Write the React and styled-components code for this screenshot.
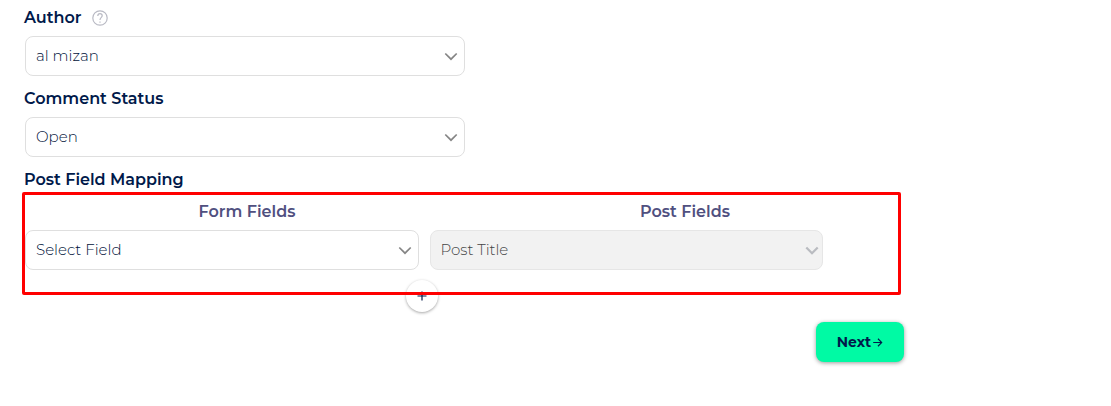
import React from 'react';
import styled, { createGlobalStyle } from 'styled-components';

const GlobalStyle = createGlobalStyle`
  *, *::before, *::after { box-sizing: border-box; }
  body {
    margin: 0;
    background: #fff;
    color: #00194a;
    font-family: Montserrat, Inter, "Liberation Sans", sans-serif;
  }
  button, select { font-family: inherit; }
`;

const Form = styled.form`
  display: flex;
  flex-direction: column;
  gap: 10px;
  max-width: 928px;
  padding: 5px 24px 24px;
`;

const Field = styled.div`
  display: flex;
  flex-direction: column;
  gap: 5px;
`;

const LabelRow = styled.div`
  display: flex;
  align-items: center;
  gap: 10px;
`;

const Label = styled.label`
  font-size: 16px;
  font-weight: 600;
  line-height: 26px;
`;

const HelpButton = styled.button`
  display: flex;
  padding: 0;
  border: 0;
  background: none;
  color: #b9bac4;
  cursor: help;
`;

const SelectBox = styled.div`
  position: relative;
  flex: 1;
  width: 100%;
  max-width: ${(p) => (p.$wide ? 'none' : '441px')};
  padding-left: 1px;
  color: ${(p) => (p.$muted ? '#b9bbc0' : '#858585')};
`;

const Select = styled.select`
  display: block;
  width: 100%;
  height: 40px;
  padding: 0 32px 2px 10px;
  appearance: none;
  border: 1px solid #dfdfdf;
  border-radius: 8px;
  background: #fff;
  color: #00123a;
  font-size: 15px;
  font-weight: 300;

  &:disabled {
    border-color: #e6e6e6;
    background: #f2f2f2;
    color: #444;
    opacity: 1;
  }
`;

const Chevron = styled.svg`
  position: absolute;
  top: 12px;
  right: ${(p) => (p.$muted ? '3px' : '6px')};
  pointer-events: none;
`;

const Mapping = styled.section`
  position: relative;
  display: flex;
  flex-direction: column;
  gap: 5px;
  margin-top: -4px;
`;

const Highlight = styled.div`
  position: absolute;
  inset: -7px 3px auto -2px;
  height: 103px;
  border: 3px solid #f00;
  border-radius: 2px;
  pointer-events: none;
`;

const MappingHeads = styled.div`
  display: flex;
  padding-left: 4px;
`;

const MappingHead = styled.div`
  flex: 1;
  color: #50507f;
  font-size: 16px;
  font-weight: 600;
  line-height: 26px;
  text-align: center;
`;

const MappingRow = styled.div`
  display: flex;
  gap: 10px;
  padding-right: 81px;
`;

const AddRow = styled.div`
  display: flex;
  justify-content: center;
  padding: 5px 85px 0 0;
`;

const AddButton = styled.button`
  display: flex;
  align-items: center;
  justify-content: center;
  width: 32px;
  height: 32px;
  padding: 0;
  border: 0;
  border-radius: 50%;
  background: #fff;
  box-shadow: 0 1px 3px rgba(0, 0, 0, 0.35);
  color: #00194a;
  cursor: pointer;
`;

const NextButton = styled.button`
  display: flex;
  align-items: center;
  justify-content: center;
  align-self: flex-end;
  gap: 1px;
  min-width: 88px;
  height: 40px;
  padding: 0 20px;
  border: 0;
  border-radius: 8px;
  background: #00faa4;
  box-shadow: 0 1px 4px rgba(0, 0, 0, 0.4);
  color: #00194a;
  font-size: 14px;
  font-weight: 700;
  cursor: pointer;
`;

function SelectField({ id, label, value, wide, disabled }) {
  return (
    <SelectBox $wide={wide} $muted={disabled}>
      <Select id={id} aria-label={label} disabled={disabled} defaultValue={value}>
        <option>{value}</option>
      </Select>
      <Chevron $muted={disabled} width="16" height="16" viewBox="0 0 16 16" fill="none" aria-hidden="true">
        <path d="M2.3 5.5 8 11.2 13.7 5.5" stroke="currentColor" strokeWidth={disabled ? 2.2 : 1.7} />
      </Chevron>
    </SelectBox>
  );
}

export default function App() {
  return (
    <>
      <GlobalStyle />
      <Form onSubmit={(e) => e.preventDefault()}>
        <Field>
          <LabelRow>
            <Label htmlFor="author">Author</Label>
            <HelpButton type="button" aria-label="About the author field">
              <svg width="16" height="16" viewBox="0 0 16 16" fill="none" stroke="currentColor" strokeWidth="1.2" aria-hidden="true">
                <circle cx="8" cy="8" r="7.2" />
                <path d="M5.8 6.1C5.8 4.6 6.7 3.7 8 3.7s2.2.9 2.2 2.1c0 1.6-2.2 1.7-2.2 4.3M8 11.4v1.3" />
              </svg>
            </HelpButton>
          </LabelRow>
          <SelectField id="author" value="al mizan" />
        </Field>
        <Field>
          <Label htmlFor="comment-status">Comment Status</Label>
          <SelectField id="comment-status" value="Open" />
        </Field>
        <Label as="div">Post Field Mapping</Label>
        <Mapping>
          <MappingHeads>
            <MappingHead>Form Fields</MappingHead>
            <MappingHead>Post Fields</MappingHead>
          </MappingHeads>
          <MappingRow>
            <SelectField label="Form field" value="Select Field" wide />
            <SelectField label="Post field" value="Post Title" wide disabled />
          </MappingRow>
          <AddRow>
            <AddButton type="button" aria-label="Add field mapping">
              <svg width="10" height="10" viewBox="0 0 10 10" stroke="currentColor" strokeWidth="1.2" aria-hidden="true">
                <path d="M5 .5v9M.5 5h9" />
              </svg>
            </AddButton>
          </AddRow>
          <Highlight />
        </Mapping>
        <NextButton type="submit">
          Next
          <svg width="11" height="11" viewBox="0 0 12 12" fill="none" stroke="currentColor" strokeWidth="1.2" aria-hidden="true">
            <path d="M1.3 6h9M6.5 1.9 10.6 6l-4.1 4.1" />
          </svg>
        </NextButton>
      </Form>
    </>
  );
}
